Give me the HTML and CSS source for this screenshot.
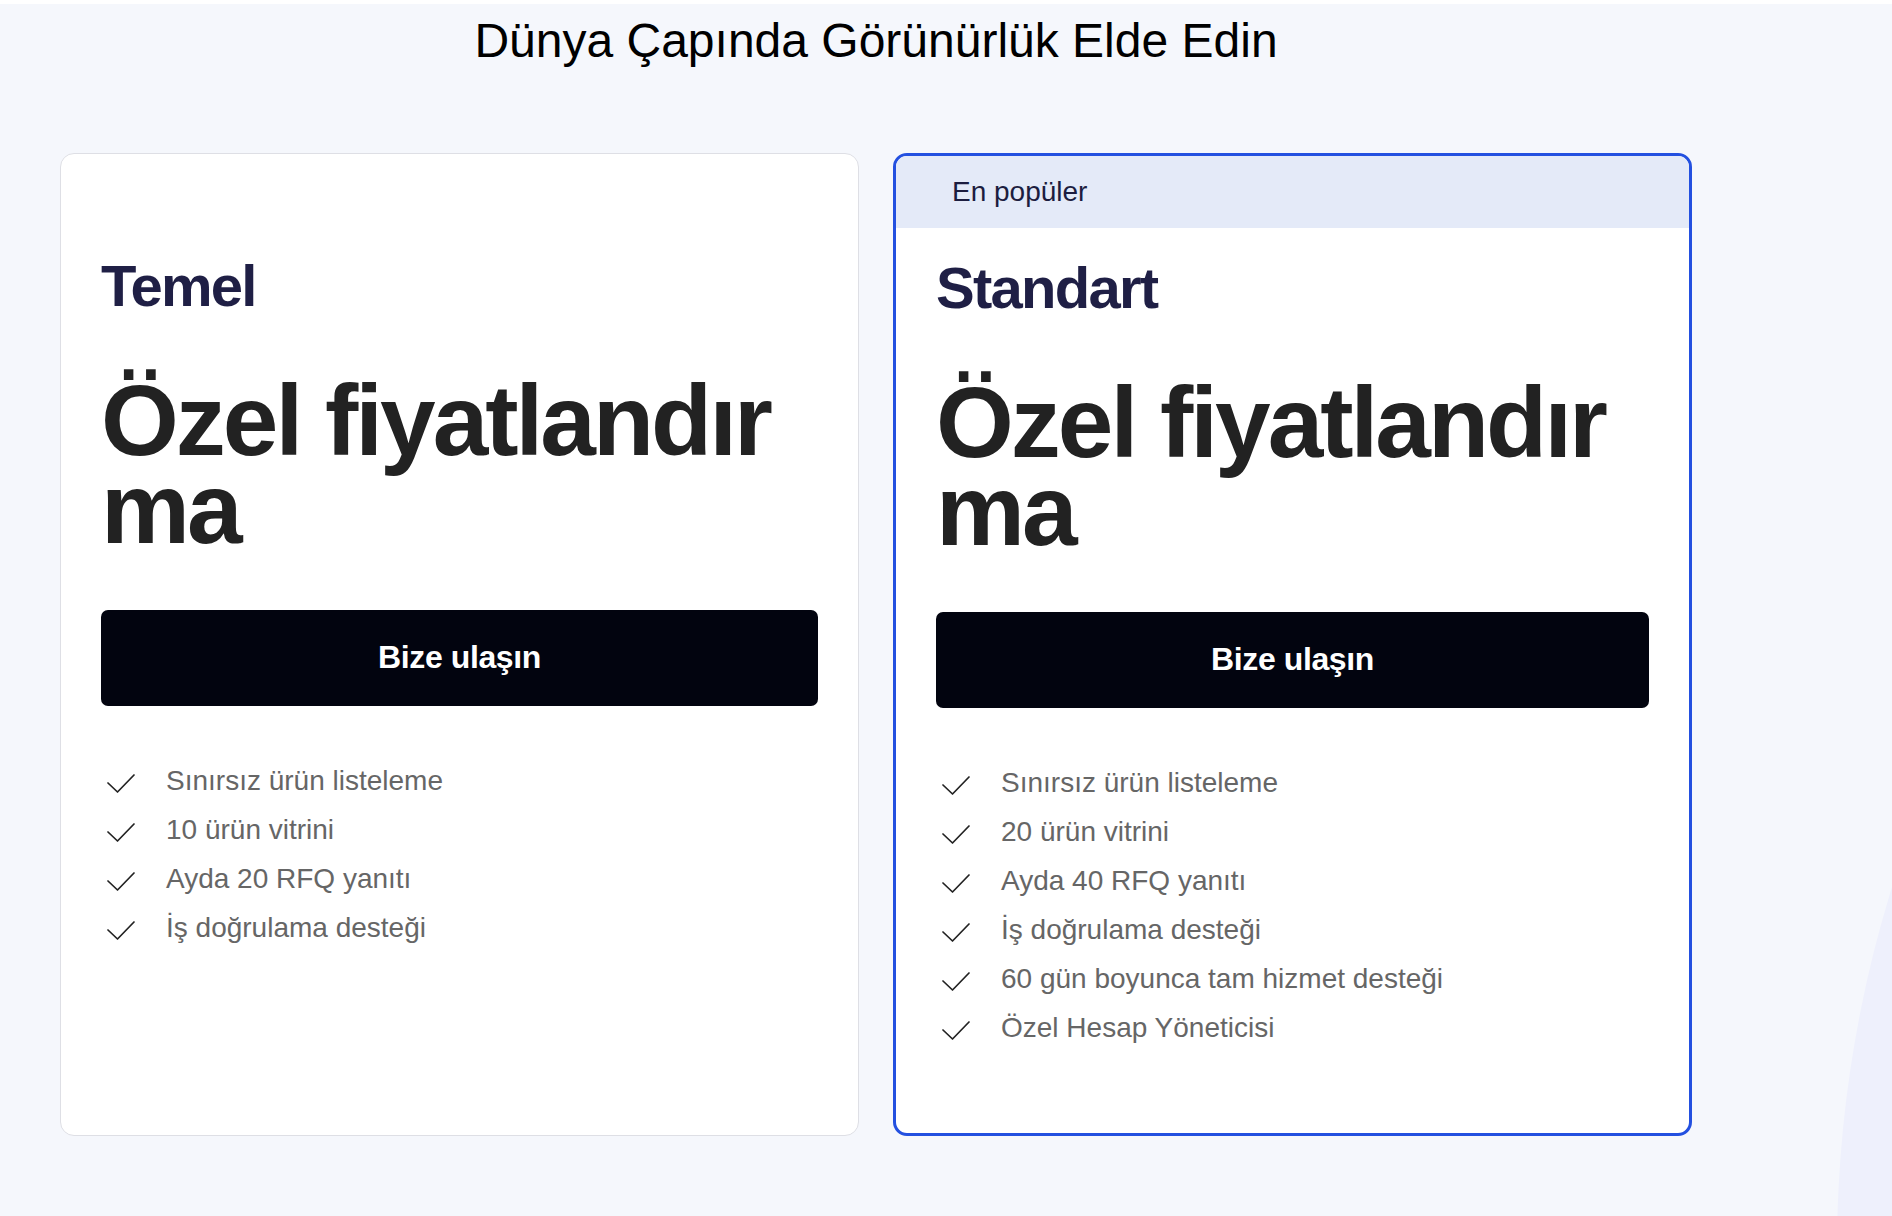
FILE: index.html
```html
<!DOCTYPE html>
<html lang="tr">
<head>
<meta charset="utf-8">
<title>Dünya Çapında Görünürlük Elde Edin</title>
<link rel="stylesheet" href="styles.css">
</head>
<body>
<div class="backdrop"><div class="blob"></div></div>
<div class="top-strip"></div>
<main class="page">
  <h1 class="title">Dünya Çapında Görünürlük Elde Edin</h1>
  <div class="plans">
    <section class="plan">
      <div class="badge"></div>
      <h2 class="plan-name">Temel</h2>
      <p class="price">Özel fiyatlandırma</p>
      <a class="cta" href="#">Bize ulaşın</a>
      <ul class="features">
        <li><svg class="check" viewBox="0 0 28 19"><path d="M1 9 L10.5 18 L27 1"/></svg><span>Sınırsız ürün listeleme</span></li>
        <li><svg class="check" viewBox="0 0 28 19"><path d="M1 9 L10.5 18 L27 1"/></svg><span>10 ürün vitrini</span></li>
        <li><svg class="check" viewBox="0 0 28 19"><path d="M1 9 L10.5 18 L27 1"/></svg><span>Ayda 20 RFQ yanıtı</span></li>
        <li><svg class="check" viewBox="0 0 28 19"><path d="M1 9 L10.5 18 L27 1"/></svg><span>İş doğrulama desteği</span></li>
      </ul>
    </section>
    <section class="plan plan--popular">
      <div class="badge">En popüler</div>
      <h2 class="plan-name">Standart</h2>
      <p class="price">Özel fiyatlandırma</p>
      <a class="cta" href="#">Bize ulaşın</a>
      <ul class="features">
        <li><svg class="check" viewBox="0 0 28 19"><path d="M1 9 L10.5 18 L27 1"/></svg><span>Sınırsız ürün listeleme</span></li>
        <li><svg class="check" viewBox="0 0 28 19"><path d="M1 9 L10.5 18 L27 1"/></svg><span>20 ürün vitrini</span></li>
        <li><svg class="check" viewBox="0 0 28 19"><path d="M1 9 L10.5 18 L27 1"/></svg><span>Ayda 40 RFQ yanıtı</span></li>
        <li><svg class="check" viewBox="0 0 28 19"><path d="M1 9 L10.5 18 L27 1"/></svg><span>İş doğrulama desteği</span></li>
        <li><svg class="check" viewBox="0 0 28 19"><path d="M1 9 L10.5 18 L27 1"/></svg><span>60 gün boyunca tam hizmet desteği</span></li>
        <li><svg class="check" viewBox="0 0 28 19"><path d="M1 9 L10.5 18 L27 1"/></svg><span>Özel Hesap Yöneticisi</span></li>
      </ul>
    </section>
  </div>
</main>
</body>
</html>
```

FILE: styles.css
```css
html, body {
  margin: 0;
  padding: 0;
}

html {
  overflow: hidden;
}

body {
  background: #f5f7fc;
  font-family: "Liberation Sans", Arial, Helvetica, sans-serif;
  height: 1216px;
  position: relative;
  overflow: hidden;
}

.backdrop {
  position: absolute;
  inset: 0;
  overflow: hidden;
}

.blob {
  position: absolute;
  left: 1837px;
  top: 25px;
  width: 2450px;
  height: 2450px;
  border-radius: 50%;
  background: #eef0fc;
}

.top-strip {
  position: relative;
  height: 4px;
  background: #ffffff;
}

.page {
  position: relative;
  width: 1632px;
  padding: 9px 0 0 60px;
}

.title {
  margin: 0;
  text-align: center;
  font-size: 48px;
  line-height: 56px;
  font-weight: 400;
  color: #000000;
}

.plans {
  display: grid;
  grid-template-columns: 799px 799px;
  column-gap: 34px;
  margin-top: 84px;
}

.plan {
  box-sizing: border-box;
  background: #ffffff;
  border: 1px solid #dedfe5;
  border-radius: 14px;
  padding: 0 40px 84px;
  overflow: hidden;
}

.plan--popular {
  border: 3px solid #2350e0;
}

.badge {
  height: 72px;
  margin: 0 -40px;
  padding-left: 56px;
  font-size: 28px;
  line-height: 72px;
  color: #1c1d40;
}

.plan--popular .badge {
  background: #e4eaf8;
}

.plan-name {
  margin: 25px 0 0;
  font-size: 58px;
  line-height: 1.2;
  font-weight: 700;
  letter-spacing: -0.03em;
  color: #1f1f45;
}

.price {
  margin: 55px 0 0;
  font-size: 100px;
  line-height: 88px;
  font-weight: 700;
  letter-spacing: -0.03em;
  color: #222222;
  word-break: break-all;
}

.cta {
  display: flex;
  align-items: center;
  justify-content: center;
  height: 96px;
  margin-top: 58px;
  border-radius: 7px;
  background: #02040f;
  color: #ffffff;
  font-size: 32px;
  font-weight: 700;
  letter-spacing: -0.4px;
  text-decoration: none;
}

.features {
  list-style: none;
  margin: 54px 0 0;
  padding: 0;
  display: flex;
  flex-direction: column;
  gap: 7px;
}

.features li {
  display: flex;
  align-items: center;
  font-size: 28px;
  line-height: 42px;
  color: #666666;
}

.check {
  flex: none;
  width: 28px;
  height: 19px;
  margin: 5px 31px 0 6px;
  fill: none;
  stroke: #222222;
  stroke-width: 1.7;
  stroke-linecap: round;
  stroke-linejoin: round;
}
```
